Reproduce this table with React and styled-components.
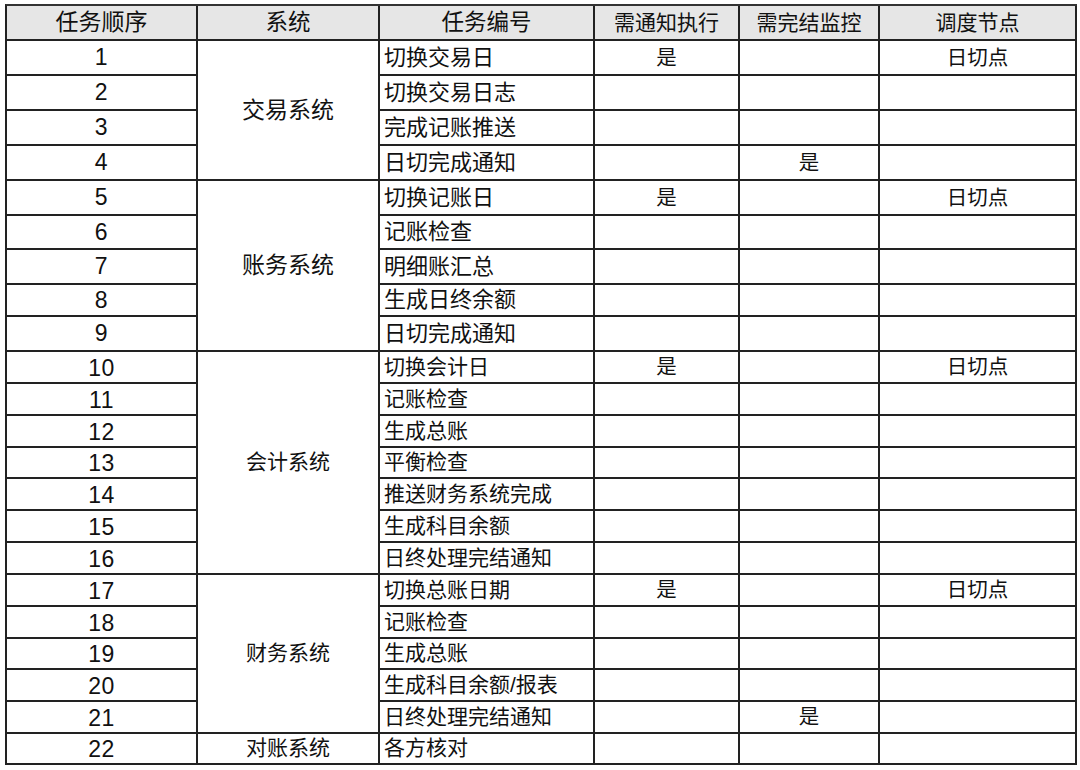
import React from "react"
import styled, { createGlobalStyle } from "styled-components"

const GlobalStyle = createGlobalStyle`
  html, body {
    margin: 0;
    padding: 0;
    background: #fff;
  }
  body {
    font-family: "Liberation Sans", "Noto Sans CJK SC", sans-serif;
    color: #111;
  }
`

const Page = styled.div`
  padding: 4px 0 0 5px;
`

const Sheet = styled.table`
  border-collapse: separate;
  border-spacing: 0;
  table-layout: fixed;
  width: 1072px;
  border-left: 2px solid #222;
  border-top: 2px solid #333;
`

const HeadCell = styled.th`
  box-sizing: border-box;
  background: #e6e6e6;
  border-right: 2px solid #222;
  border-bottom: 2px solid #222;
  font-weight: 400;
  font-size: ${(p) => p.$size}px;
  line-height: 1.2;
  padding: 0;
  text-align: center;
  vertical-align: middle;
`

const Cell = styled.td`
  box-sizing: border-box;
  border-right: 2px solid #222;
  border-bottom: 2px solid #222;
  padding: 0 0 0 ${(p) => (p.$left ? "4px" : "0")};
  font-size: ${(p) => p.$size || 21}px;
  line-height: 1.15;
  text-align: ${(p) => (p.$left ? "left" : "center")};
  vertical-align: middle;
  white-space: nowrap;
  overflow: hidden;
`

const Num = styled.span`
  display: inline-block;
  font-family: "Liberation Sans", sans-serif;
  font-size: 23px;
  line-height: 1;
  letter-spacing: 0.5px;
  padding-top: ${(p) => (p.$low ? "4px" : "2px")};
`

const Row = styled.tr`
  height: ${(p) => p.$h}px;
`

const columns = [
  { title: "任务顺序", width: 191, size: 23 },
  { title: "系统", width: 182, size: 22.5 },
  { title: "任务编号", width: 215, size: 22.5 },
  { title: "需通知执行", width: 145, size: 21 },
  { title: "需完结监控", width: 140, size: 21 },
  { title: "调度节点", width: 197, size: 21 },
]

// each group: system name, its font size, and the tasks inside it
const groups = [
  {
    name: "交易系统",
    size: 23,
    taskSize: 22,
    tasks: [
      { t: "切换交易日", notify: true, node: "日切点", h: 35 },
      { t: "切换交易日志", h: 35 },
      { t: "完成记账推送", h: 35 },
      { t: "日切完成通知", monitor: true, h: 35 },
    ],
  },
  {
    name: "账务系统",
    size: 23,
    taskSize: 22,
    tasks: [
      { t: "切换记账日", notify: true, node: "日切点", h: 35 },
      { t: "记账检查", h: 34 },
      { t: "明细账汇总", h: 35 },
      { t: "生成日终余额", h: 32 },
      { t: "日切完成通知", h: 35 },
    ],
  },
  {
    name: "会计系统",
    size: 21,
    taskSize: 21,
    tasks: [
      { t: "切换会计日", notify: true, node: "日切点", h: 32 },
      { t: "记账检查", h: 32 },
      { t: "生成总账", h: 32 },
      { t: "平衡检查", h: 31 },
      { t: "推送财务系统完成", h: 32 },
      { t: "生成科目余额", h: 32 },
      { t: "日终处理完结通知", h: 32 },
    ],
  },
  {
    name: "财务系统",
    size: 21,
    taskSize: 21,
    tasks: [
      { t: "切换总账日期", notify: true, node: "日切点", h: 32 },
      { t: "记账检查", h: 32 },
      { t: "生成总账", h: 31 },
      { t: "生成科目余额/报表", h: 32 },
      { t: "日终处理完结通知", monitor: true, h: 32 },
    ],
  },
  {
    name: "对账系统",
    size: 21,
    taskSize: 21,
    tasks: [{ t: "各方核对", h: 31 }],
  },
]

const Body = () => {
  const rows = []
  let n = 0
  groups.forEach((g) => {
    g.tasks.forEach((task, ti) => {
      n += 1
      rows.push(
        <Row key={n} $h={task.h}>
          <Cell>
            <Num $low={g.taskSize < 22}>{n}</Num>
          </Cell>
          {ti === 0 && (
            <Cell rowSpan={g.tasks.length} $size={g.size}>
              {g.name}
            </Cell>
          )}
          <Cell $left $size={g.taskSize}>
            {task.t}
          </Cell>
          <Cell $size={20.5}>{task.notify ? "是" : ""}</Cell>
          <Cell $size={20.5}>{task.monitor ? "是" : ""}</Cell>
          <Cell $size={20.5}>{task.node || ""}</Cell>
        </Row>
      )
    })
  })
  return <tbody>{rows}</tbody>
}

export default function App() {
  return (
    <>
      <GlobalStyle />
      <Page>
        <Sheet>
          <colgroup>
            {columns.map((c) => (
              <col key={c.title} style={{ width: c.width }} />
            ))}
          </colgroup>
          <thead>
            <Row $h={35}>
              {columns.map((c) => (
                <HeadCell key={c.title} $size={c.size}>
                  {c.title}
                </HeadCell>
              ))}
            </Row>
          </thead>
          <Body />
        </Sheet>
      </Page>
    </>
  )
}
